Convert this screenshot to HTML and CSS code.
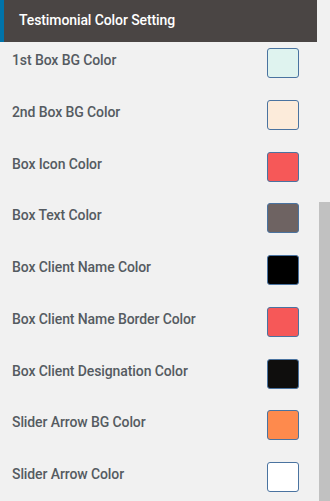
FILE: index.html
```html
<!DOCTYPE html>
<html lang="en">
<head>
    <meta charset="UTF-8">
    <meta name="viewport" content="width=device-width, initial-scale=1.0">
    <title>Testimonial Color Setting</title>
    <link rel="stylesheet" href="styles.css">
</head>
<body>
    <div class="panel">
        <!-- Cabecera de la sección -->
        <div class="panel-header">Testimonial Color Setting</div>

        <div class="color-list">
            <div class="color-row">
                <span class="color-label">1st Box BG Color</span>
                <span class="swatch" style="background-color: #dff3ef;"></span>
            </div>
            <div class="color-row">
                <span class="color-label">2nd Box BG Color</span>
                <span class="swatch" style="background-color: #fcebda;"></span>
            </div>
            <div class="color-row">
                <span class="color-label">Box Icon Color</span>
                <span class="swatch" style="background-color: #f65858;"></span>
            </div>
            <div class="color-row">
                <span class="color-label">Box Text Color</span>
                <span class="swatch" style="background-color: #6e6362;"></span>
            </div>
            <div class="color-row">
                <span class="color-label">Box Client Name Color</span>
                <span class="swatch" style="background-color: #000000;"></span>
            </div>
            <div class="color-row">
                <span class="color-label">Box Client Name Border Color</span>
                <span class="swatch" style="background-color: #f65858;"></span>
            </div>
            <div class="color-row">
                <span class="color-label">Box Client Designation Color</span>
                <span class="swatch" style="background-color: #0f0e0d;"></span>
            </div>
            <div class="color-row">
                <span class="color-label">Slider Arrow BG Color</span>
                <span class="swatch" style="background-color: #fe8a4d;"></span>
            </div>
            <div class="color-row">
                <span class="color-label">Slider Arrow Color</span>
                <span class="swatch" style="background-color: #ffffff;"></span>
            </div>
        </div>
    </div>

    <div class="scrollbar"></div>
</body>
</html>
```

FILE: styles.css
```css
body {
    font-family: Roboto, "Liberation Sans", sans-serif;
    background-color: #f1f1f1;
    margin: 0;
    color: #555b61;
    overflow: hidden;
}
.panel {
    width: 317px;
}
.panel-header {
    height: 42px;
    box-sizing: border-box;
    border-left: 4px solid #0073aa;
    padding-left: 15px;
    background-color: #4a4544;
    color: #ffffff;
    font-size: 14px;
    font-weight: 500;
    letter-spacing: -0.1px;
    line-height: 40px;
}
.color-row {
    display: flex;
    justify-content: space-between;
    align-items: flex-start;
    height: 51.75px;
    box-sizing: border-box;
    padding: 6px 18px 0 12px;
}
.color-label {
    font-size: 14px;
    font-weight: 500;
    letter-spacing: -0.1px;
    line-height: 20px;
    margin-top: 2px;
}
.swatch {
    width: 32px;
    height: 30px;
    box-sizing: border-box;
    border: 1px solid #4a73a0;
    border-radius: 3px;
}
.scrollbar {
    position: absolute;
    top: 202px;
    left: 319px;
    width: 11px;
    height: 299px;
    background-color: #c1c1c1;
}
```
